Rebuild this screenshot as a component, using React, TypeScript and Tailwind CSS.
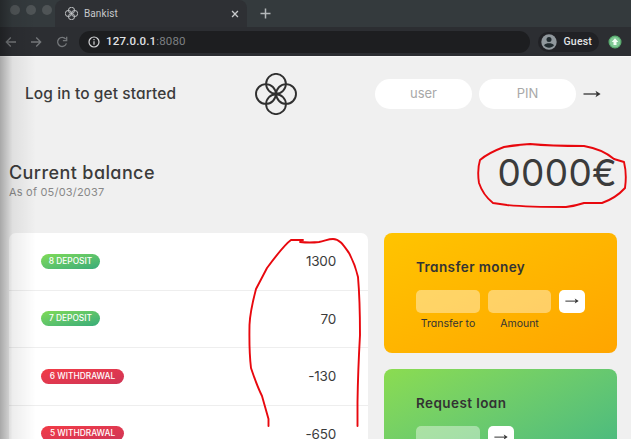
import React from "react";

function Rosette({ size, stroke, color }: { size: number; stroke: number; color: string }) {
  return (
    <svg width={size} height={size} viewBox="0 0 42 42" fill="none" stroke={color} strokeWidth={stroke} className="shrink-0">
      <circle cx="21" cy="10.8" r="9.9" />
      <circle cx="10.9" cy="21" r="9.9" />
      <circle cx="31.1" cy="21" r="9.9" />
      <circle cx="21" cy="31.2" r="9.9" />
    </svg>
  );
}

function LongArrow({ width }: { width: number }) {
  return (
    <svg width={width} height={(width * 8) / 18} viewBox="0 0 18 8" className="shrink-0">
      <path d="M0.5 4H15" stroke="#333" strokeWidth="1.3" />
      <path d="M12.5 0.8L17.6 4L12.5 7.2L13.8 4Z" fill="#333" />
    </svg>
  );
}

function Browser() {
  return (
    <header className="shrink-0 bg-[#2c2e32] font-['Roboto','Liberation_Sans',sans-serif]">
      <div className="flex h-[27px] bg-[#343a3d]">
        <div className="flex w-[55px] items-start gap-[6px] rounded-br-lg pl-[10px] pt-[5px]">
          <span className="size-[10px] rounded-full bg-[#4f5456]" />
          <span className="size-[10px] rounded-full bg-[#4f5456]" />
          <span className="size-[10px] rounded-full bg-[#4f5456]" />
        </div>
        <div className="flex w-[192px] items-center rounded-t-lg bg-[#2e3034] pl-[10px] pr-[8px] text-[10px] text-[#c7c9cb]">
          <Rosette size={13} stroke={3} color="#c7c9cb" />
          <span className="ml-[6px] grow tracking-[0.1px]">Bankist</span>
          <svg width="8" height="8" viewBox="0 0 9 9" stroke="#c7c9cb" strokeWidth="1.5">
            <path d="M1.2 1.2L7.8 7.8M7.8 1.2L1.2 7.8" />
          </svg>
        </div>
        <svg width="11" height="11" viewBox="0 0 11 11" stroke="#b4b8ba" strokeWidth="1.5" className="ml-[13px] mt-[8px]">
          <path d="M5.5 0.5V10.5M0.5 5.5H10.5" />
        </svg>
      </div>
      <div className="flex h-[29px] items-center pl-[5px]">
        <svg width="64" height="12" viewBox="0 0 64 12" fill="none" stroke="#74777a" strokeWidth="1.3">
          <path d="M11 6H1.5M5.8 1.5L1.3 6L5.8 10.5" />
          <path d="M26 6H35.5M31.2 1.5L35.7 6L31.2 10.5" />
          <path d="M60.7 3.2A4.5 4.5 0 1 0 61.4 7.4M61.7 0.8V4.6H57.9" />
        </svg>
        <div className="ml-[10px] flex h-[22px] w-[451px] items-center rounded-full bg-[#1d1e20] pl-[9px] text-[11.5px] text-[#7d8083]">
          <svg width="12" height="12" viewBox="0 0 12 12" fill="none" stroke="#d4d5d7" strokeWidth="1.2">
            <circle cx="6" cy="6" r="5" />
            <path d="M6 5.2V8.8M6 3V4.2" />
          </svg>
          <span className="ml-[6px] tracking-[0.16px]"><span className="font-medium text-[#e1e2e4]">127.0.0.1</span>:8080</span>
        </div>
        <div className="ml-[8px] flex h-[20px] w-[61px] items-center rounded-full bg-[#202125] pl-[2.5px] text-[10.5px] font-medium tracking-[0.2px] text-[#e3e4e6]">
          <svg width="16" height="16" viewBox="0 0 16 16">
            <circle cx="8" cy="8" r="7.7" fill="#8f979c" />
            <circle cx="8" cy="5.5" r="2.5" fill="#202a2e" />
            <path d="M3 11.3C4 9.7 6 9.3 8 9.3S12 9.7 13 11.3C12 12.8 10 13.7 8 13.7S4 12.8 3 11.3Z" fill="#202a2e" />
          </svg>
          <span className="ml-[7px]">Guest</span>
        </div>
        <svg width="14" height="14" viewBox="0 0 14 14" className="ml-[9px]">
          <circle cx="7" cy="7" r="5.9" fill="#80c995" stroke="#5aad70" strokeWidth="1.2" />
          <path d="M7 3.3L10.3 7H8.5V10H5.5V7H3.7Z" fill="#f2fff5" />
        </svg>
      </div>
    </header>
  );
}

const movements = [
  { label: "8 DEPOSIT", value: "1300", style: "w-[59px] from-[#7fdb54] to-[#36ab78]" },
  { label: "7 DEPOSIT", value: "70", style: "w-[59px] from-[#7fdb54] to-[#36ab78]" },
  { label: "6 WITHDRAWAL", value: "-130", style: "w-[83px] from-[#f23b46] to-[#cf3556]" },
  { label: "5 WITHDRAWAL", value: "-650", style: "w-[83px] from-[#f23b46] to-[#cf3556]" },
];

function SubmitButton() {
  return (
    <button className="flex h-[23px] w-[26px] items-center justify-center rounded-[5px] bg-white">
      <LongArrow width={14} />
    </button>
  );
}

export default function App() {
  return (
    <div className="relative flex h-[439px] w-[631px] flex-col overflow-hidden bg-[#f0f0f0] font-['Inter','Liberation_Sans',sans-serif] text-[#3b3b3b] [font-feature-settings:'cv11']">
      <Browser />
      <nav className="flex h-[75px] shrink-0 items-center border-t border-[#f8f8f8] pl-[25px]">
        <p className="w-[230px] whitespace-nowrap text-[15.5px] font-medium tracking-[0.1px]">Log in to get started</p>
        <Rosette size={42} stroke={1.9} color="#303030" />
        <div className="ml-[78px] flex items-center gap-[7px] text-[13px] text-[#a8a8a8]">
          <div className="flex h-[30px] w-[97px] items-center justify-center rounded-full bg-white">user</div>
          <div className="flex h-[30px] w-[97px] items-center justify-center rounded-full bg-white">PIN</div>
          <LongArrow width={18} />
        </div>
      </nav>
      <section className="flex h-[102px] shrink-0 items-start justify-between pl-[9px] pr-[14px]">
        <div className="pt-[29px]">
          <h1 className="text-[18px] font-medium leading-[25px] tracking-[0.4px]">Current balance</h1>
          <p className="text-[11px] leading-[14px] tracking-[0.2px] text-[#888]">As of 05/03/2037</p>
        </div>
        <p className="pt-[20px] text-[37px] leading-[44px] tracking-[0.3px]">0000€</p>
      </section>
      <main className="flex gap-[16px] pl-[9px]">
        <div className="h-[220px] w-[359px] shrink-0 overflow-hidden rounded-[7px] bg-white">
          {movements.map((m) => (
            <div key={m.label} className="flex h-[57.5px] items-center justify-between border-b border-[#eee] pl-[32px] pr-[32px]">
              <span className={`flex h-[15px] items-center justify-center whitespace-nowrap rounded-full bg-linear-to-br text-[8.4px] font-medium text-white ${m.style}`}>{m.label}</span>
              <span className="text-[13.5px] tracking-[-0.2px]">{m.value}</span>
            </div>
          ))}
        </div>
        <div className="flex w-[233px] shrink-0 flex-col gap-[16px] text-[#333]">
          <div className="h-[120px] rounded-[8px] bg-linear-to-br from-[#ffc400] to-[#ffa500] px-[32px] pt-[24px]">
            <h2 className="text-[13.5px] font-semibold leading-[20px] tracking-[0.42px]">Transfer money</h2>
            <div className="mt-[13px] flex gap-[8px] text-center text-[10.5px] leading-[14px]">
              <div className="w-[64px]">
                <div className="mb-[4px] h-[23px] rounded-[5px] bg-white/40" />
                Transfer to
              </div>
              <div className="w-[63px]">
                <div className="mb-[4px] h-[23px] rounded-[5px] bg-white/40" />
                Amount
              </div>
              <SubmitButton />
            </div>
          </div>
          <div className="h-[120px] rounded-[8px] bg-linear-to-br from-[#8bdc50] to-[#39b385] px-[32px] pt-[24px]">
            <h2 className="text-[13.5px] font-semibold leading-[20px] tracking-[0.42px]">Request loan</h2>
            <div className="mt-[13px] flex gap-[8px]">
              <div className="h-[23px] w-[64px] rounded-[5px] bg-white/40" />
              <SubmitButton />
            </div>
          </div>
        </div>
      </main>
      <div className="absolute inset-y-0 left-0 w-[36px] bg-linear-to-r from-black/30 via-black/7 via-35% to-transparent" />
      <svg className="absolute inset-0" width="631" height="439" viewBox="0 0 631 439" fill="none" stroke="#e8080e" strokeWidth="1.9" strokeLinejoin="round" strokeLinecap="round">
        <path d="M520 145L504 147Q488 153 480 160Q477 170 479 183Q483 195 493 203L507 205Q528 207 566 207Q575 206 584 203H602Q616 198 625 188Q627 174 624 162L614 159Q602 149 584 146Q550 146 530 144Q514 145 504 147" />
        <path d="M303 240L291 240Q284 245 267 268L256 289Q250 312 249.5 325Q249 352 251 368Q257 386 262 396L268.5 419V426" />
        <path d="M300 242Q310 243 319 242C325 241 328 239 333 239C340 239 344 246 349 253Q355 264 358 277Q360 300 360 335Q358 370 357.5 402V426" />
      </svg>
    </div>
  );
}
